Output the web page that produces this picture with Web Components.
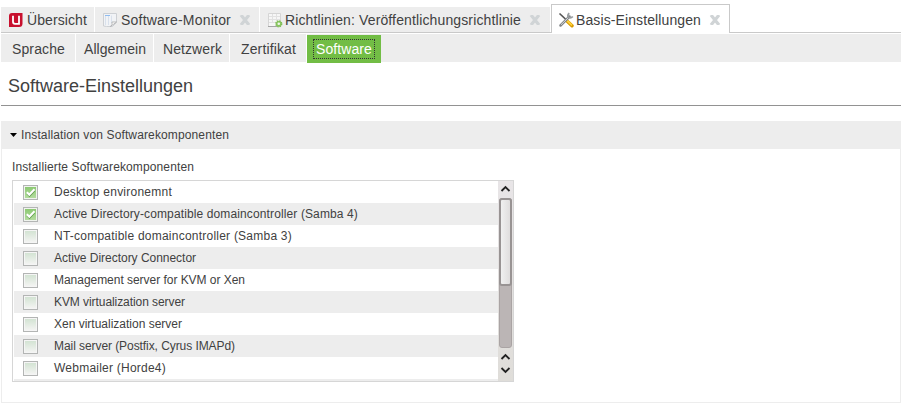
<!DOCTYPE html>
<html lang="de"><head><meta charset="utf-8"><title>Software-Einstellungen</title>
<style>body{margin:0;background:#fff}</style></head><body>
<settings-page></settings-page>
<script>
function define(name, html, setup) {
  const t = document.createElement('template');
  t.innerHTML = html;
  customElements.define(name, class extends HTMLElement {
    connectedCallback() {
      if (this.shadowRoot) return;
      this.attachShadow({mode: 'open'}).append(t.content.cloneNode(true));
      if (setup) setup(this, this.shadowRoot);
    }
  });
}
/* Single line of text tracked to the width given in its "w" attribute. */
define('fit-text', `<style>:host{display:block;white-space:nowrap}span{display:inline-block}</style><span></span>`, (el, root) => {
  const s = root.querySelector('span');
  s.textContent = el.getAttribute('text');
  const w = +el.getAttribute('w');
  s.style.letterSpacing = (w - s.getBoundingClientRect().width) / s.textContent.length + 'px';
});
const icons = {
  logo: `<path d="M4 1H14.5V11.5Q14.5 15 11 15H1V4Q1 1 4 1Z" fill="#c8102e"/><path d="M5 3.8V9.8Q5 11.8 7 11.8H11V3.8" fill="none" stroke="#fff" stroke-width="1.8"/>`,
  page: `<path d="M1.5 1.5H14.5V10.5L10.5 14.5H4.5L1.5 14Z" fill="#f1f3f6" stroke="#cdd0d4"/><path d="M3.5 3.5V13M6.5 3.5V13M9.5 3.5V11" stroke="#d9e1ec"/><path d="M3 3.5H8" stroke="#8fbcf0"/><path d="M14.5 10L8.5 14.5Q10.8 12.8 10 10Z" fill="#fff" stroke="#aaa" stroke-width=".8"/>`,
  policy: `<path d="M1.5 1.5H13.5V14.5H1.5Z" fill="#f6f6f6" stroke="#d5d5d5"/><path d="M2 4.5H13M2 7.5H13M2 10.5H9M5.5 2V11M9.5 2V9" stroke="#e1e1e1"/><path d="M1 14.5H10" stroke="#a5a5a5"/><circle cx="11.8" cy="11.8" r="2.8" fill="#8cc861" stroke="#7dbd55" stroke-width="1.6" stroke-dasharray="1.4 .8"/><circle cx="11.8" cy="11.8" r="1.3" fill="#eef7e8"/>`,
  tools: `<path d="M1.5 1.5L9 8.5" stroke="#555" stroke-width="1.7"/><path d="M9 9L14 13.8" stroke="#d79a00" stroke-width="3.4" stroke-linecap="round"/><path d="M9 8.5L14 13.3" stroke="#ffd23c" stroke-width="1.8"/><path d="M2.5 13.5L11.5 4.5" stroke="#808386" stroke-width="2.5" stroke-linecap="round"/><path d="M3 12.8L11 5" stroke="#d5d8da" stroke-width="1"/><path d="M11.2 1.2Q9.2 3 10.3 5.3Q12.8 6.8 14.8 4.5" fill="none" stroke="#999da0" stroke-width="1.8"/>`
};
define('main-tab', `<style>
:host{display:block;box-sizing:border-box;height:25px;background:#ededed;flex:none;margin-top:3px;font-size:14px}
:host([active]){height:29px;margin-top:0;background:#fff;border:1px solid #c9c9c9;border-bottom:0}
.r{display:flex;align-items:center;height:26px;padding-left:7px}:host([active]) .r{height:30px;padding-left:6px}
svg{display:block;flex:none}.x{margin-left:8px}
</style><div class="r"><svg class="i" width="16" height="16" viewBox="0 0 16 16"></svg><svg class="x" width="12" height="10" viewBox="0 0 12 10"><path d="M2 0L10 10M10 0L2 10" stroke="#d0d4d6" stroke-width="3.2"/></svg></div>`, (el, root) => {
  el.style.width = el.getAttribute('width') + 'px';
  const i = root.querySelector('.i');
  i.innerHTML = icons[el.getAttribute('icon')];
  i.style.marginRight = el.getAttribute('gap') + 'px';
  const n = document.createElement('fit-text');
  n.setAttribute('text', el.getAttribute('text')); n.setAttribute('w', el.getAttribute('w'));
  i.after(n);
  if (!el.hasAttribute('closable')) root.querySelector('.x').remove();
});
define('sub-tab', `<style>
:host{display:block;box-sizing:border-box;height:28px;line-height:30px;padding-left:var(--p,11px);font-size:14px;border-right:1px solid #fff}
:host([active]){background:#72bd45;color:#fff;height:28px;margin:1px 0 -1px;padding:4px 6px;border:0;line-height:18px;box-shadow:-1px 0 #fff}
:host([active]) div{border:1px dotted #333;height:18px;padding-left:2px}
</style><div><slot></slot></div>`);
define('list-row', `<style>
:host{display:flex;align-items:center;height:22px;flex:none;padding-left:9px;font-size:12px}
:host(:nth-child(even)){background:#ededed}
i{box-sizing:border-box;width:15px;height:15px;border:1px solid #b3b5b4;background:linear-gradient(#d3e3d3,#f3f4f2) content-box,#f5f5f5;padding:1px;margin:1px 16px 0 0}
:host([checked]) i{background:linear-gradient(#8cc972,#b4dc9f) content-box,#f0f4ee}
svg{display:none}:host([checked]) svg{display:block}
</style><i><svg width="11" height="11" viewBox="0 0 11 11"><path d="M2 6.1L4.5 8.8L9.5 3.3" fill="none" stroke="#5f9a4b" stroke-width="2"/><path d="M1.8 5.3L4.3 7.8L9.5 2.3" fill="none" stroke="#fff" stroke-width="2"/></svg></i><slot></slot>`);
define('scroll-bar', `<style>
:host{display:flex;flex-direction:column;box-sizing:border-box;width:15px;background:linear-gradient(#e8e5e7,#dfddd9);padding:0 1px}
svg{display:block;flex:none}.t{height:150px;background:#bbb5b5;border-radius:3px;box-sizing:border-box;border:1px solid #aaa4a4;margin-top:17px}
.h{box-sizing:border-box;height:88px;border:2px solid #989393;border-radius:3px;background:linear-gradient(90deg,#f0f0f0,#dfdddd);margin:-1px}
path{fill:none;stroke:#222;stroke-width:1.8}.u{margin:4px 0 -13px 1px}.a{margin:4px 0 0 1px}.b{margin:4px 0 0 1px}
</style><svg class="u" width="11" height="9"><path d="M1.5 6L5.5 2L9.5 6"/></svg><div class="t"><div class="h"></div></div>
<svg class="a" width="11" height="9"><path d="M1.5 7L5.5 3L9.5 7"/></svg><svg class="b" width="11" height="9"><path d="M1.5 3L5.5 7L9.5 3"/></svg>`);
define('software-list', `<style>
:host{display:flex;box-sizing:border-box;width:502px;height:202px;border:1px solid #d6d6d6}
.r{flex:1;display:flex;flex-direction:column;overflow:hidden;margin-left:1px}
</style><div class="r"><slot></slot></div><scroll-bar></scroll-bar>`);
define('content-panel', `<style>
:host{display:block;box-sizing:border-box;width:900px;height:282px;border:1px solid #ededed;border-top:0;margin-top:15px}
header{height:28px;background:#ededed;display:flex;align-items:center;padding-left:8px;font-size:12px}
svg{margin-right:3px}
main{padding:11px 0 0 10px;font-size:12px}
</style><header><svg width="8" height="4"><path d="M0 0H7L3.5 4Z" fill="#000"/></svg><slot name="title"></slot></header><main><slot></slot></main>`);
define('settings-page', `<style>
:host{display:block;box-sizing:border-box;width:904px;height:414px;padding:4px 0 0 1px;font-family:"Liberation Sans",Arial,sans-serif;color:#414141;overflow:hidden}
.tabs{display:flex;width:900px;height:28px;gap:1px;border-bottom:1px solid #c9c9c9}
.sub{display:flex;width:900px;height:28px;background:#ededed;margin-top:1px}
.title{box-sizing:border-box;width:900px;height:44px;padding:13px 0 0 7px;font-size:18px;line-height:22px;border-bottom:1px solid #929292}
.label{height:20px;line-height:14px}
</style>
<div class="tabs">
<main-tab width="93" icon="logo" text="Übersicht" w="60" gap="3"></main-tab>
<main-tab width="164" icon="page" text="Software-Monitor" w="110" gap="3" closable></main-tab>
<main-tab width="290" icon="policy" text="Richtlinien: Veröffentlichungsrichtlinie" w="236" gap="2" closable></main-tab>
<main-tab width="179" icon="tools" text="Basis-Einstellungen" w="125" gap="2" closable active></main-tab>
</div>
<div class="sub">
<sub-tab style="width:75px"><fit-text text="Sprache" w="53"></fit-text></sub-tab>
<sub-tab style="width:78px;--p:8px"><fit-text text="Allgemein" w="62"></fit-text></sub-tab>
<sub-tab style="width:76px;--p:9px"><fit-text text="Netzwerk" w="59"></fit-text></sub-tab>
<sub-tab style="width:77px;--p:11px"><fit-text text="Zertifikat" w="55"></fit-text></sub-tab>
<sub-tab style="width:74px" active><fit-text text="Software" w="56"></fit-text></sub-tab>
</div>
<div class="title"><fit-text text="Software-Einstellungen" w="185"></fit-text></div>
<content-panel><fit-text slot="title" text="Installation von Softwarekomponenten" w="208"></fit-text>
<div class="label"><fit-text text="Installierte Softwarekomponenten" w="182"></fit-text></div>
<software-list>
<list-row checked><fit-text text="Desktop environemnt" w="118"></fit-text></list-row>
<list-row checked><fit-text text="Active Directory-compatible domaincontroller (Samba 4)" w="304"></fit-text></list-row>
<list-row><fit-text text="NT-compatible domaincontroller (Samba 3)" w="238"></fit-text></list-row>
<list-row><fit-text text="Active Directory Connector" w="142"></fit-text></list-row>
<list-row><fit-text text="Management server for KVM or Xen" w="191"></fit-text></list-row>
<list-row><fit-text text="KVM virtualization server" w="131"></fit-text></list-row>
<list-row><fit-text text="Xen virtualization server" w="128"></fit-text></list-row>
<list-row><fit-text text="Mail server (Postfix, Cyrus IMAPd)" w="181"></fit-text></list-row>
<list-row><fit-text text="Webmailer (Horde4)" w="112"></fit-text></list-row>
<list-row></list-row>
</software-list></content-panel>`);
</script></body></html>
